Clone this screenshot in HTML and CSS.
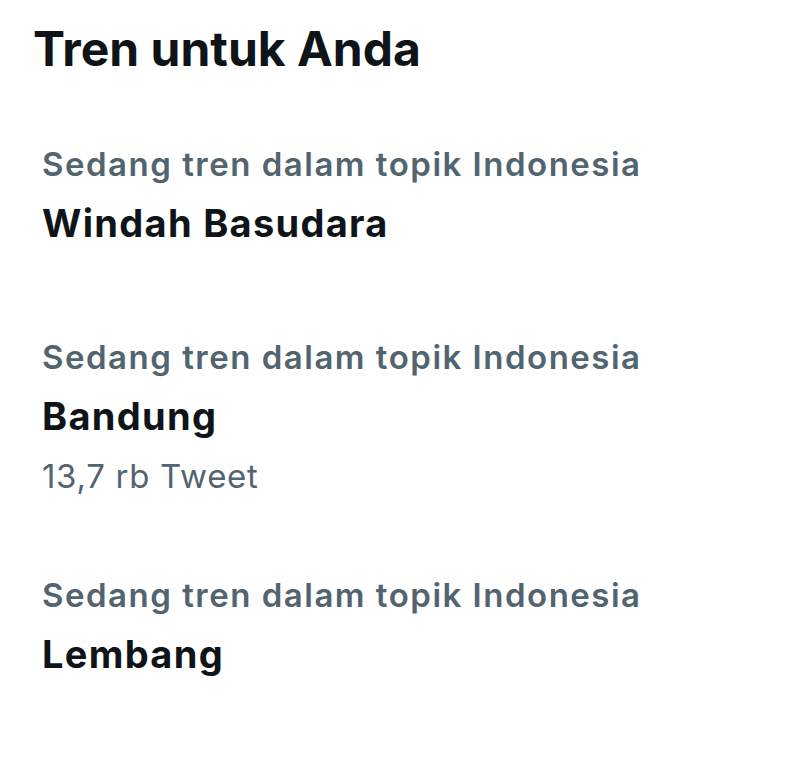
FILE: index.html
```html
<!DOCTYPE html>
<html lang="id">
<head>
<meta charset="utf-8">
<title>Tren untuk Anda</title>
<link rel="stylesheet" href="styles.css">
</head>
<body>
<section class="panel">
  <h1 class="panel-title">Tren untuk Anda</h1>
  <div class="trend-list">
    <div class="trend">
      <div class="trend-context">Sedang tren dalam topik Indonesia</div>
      <div class="trend-name">Windah Basudara</div>
    </div>
    <div class="trend">
      <div class="trend-context">Sedang tren dalam topik Indonesia</div>
      <div class="trend-name">Bandung</div>
      <div class="trend-count">13,7 rb Tweet</div>
    </div>
    <div class="trend">
      <div class="trend-context">Sedang tren dalam topik Indonesia</div>
      <div class="trend-name">Lembang</div>
    </div>
  </div>
</section>
</body>
</html>
```
FILE: styles.css
```css
html, body {
  margin: 0;
  padding: 0;
  background: #ffffff;
}
body {
  width: 785px;
  height: 767px;
  overflow: hidden;
  font-family: Inter, Roboto, sans-serif;
}
.panel {
  padding: 25px 0 0 0;
}
.panel-title {
  margin: 0 0 0 33px;
  font-family: Inter, sans-serif;
  font-weight: 700;
  font-size: 48px;
  line-height: 1;
  color: #0f1419;
}
.trend-list {
  display: flex;
  flex-direction: column;
  gap: 90px;
  margin-top: 71px;
  padding: 0 42px;
}
.trend {
  display: flex;
  flex-direction: column;
}
.trend-context {
  font-size: 33px;
  font-weight: 600;
  line-height: 40px;
  letter-spacing: 1.5px;
  color: #536471;
}
.trend-name {
  margin-top: 15px;
  font-size: 38px;
  font-weight: 700;
  line-height: 48px;
  letter-spacing: 1.3px;
  color: #0f1419;
}
.trend-count {
  margin-top: 27px;
  font-size: 33px;
  font-weight: 400;
  line-height: 18px;
  letter-spacing: 0.7px;
  color: #536471;
}
```
